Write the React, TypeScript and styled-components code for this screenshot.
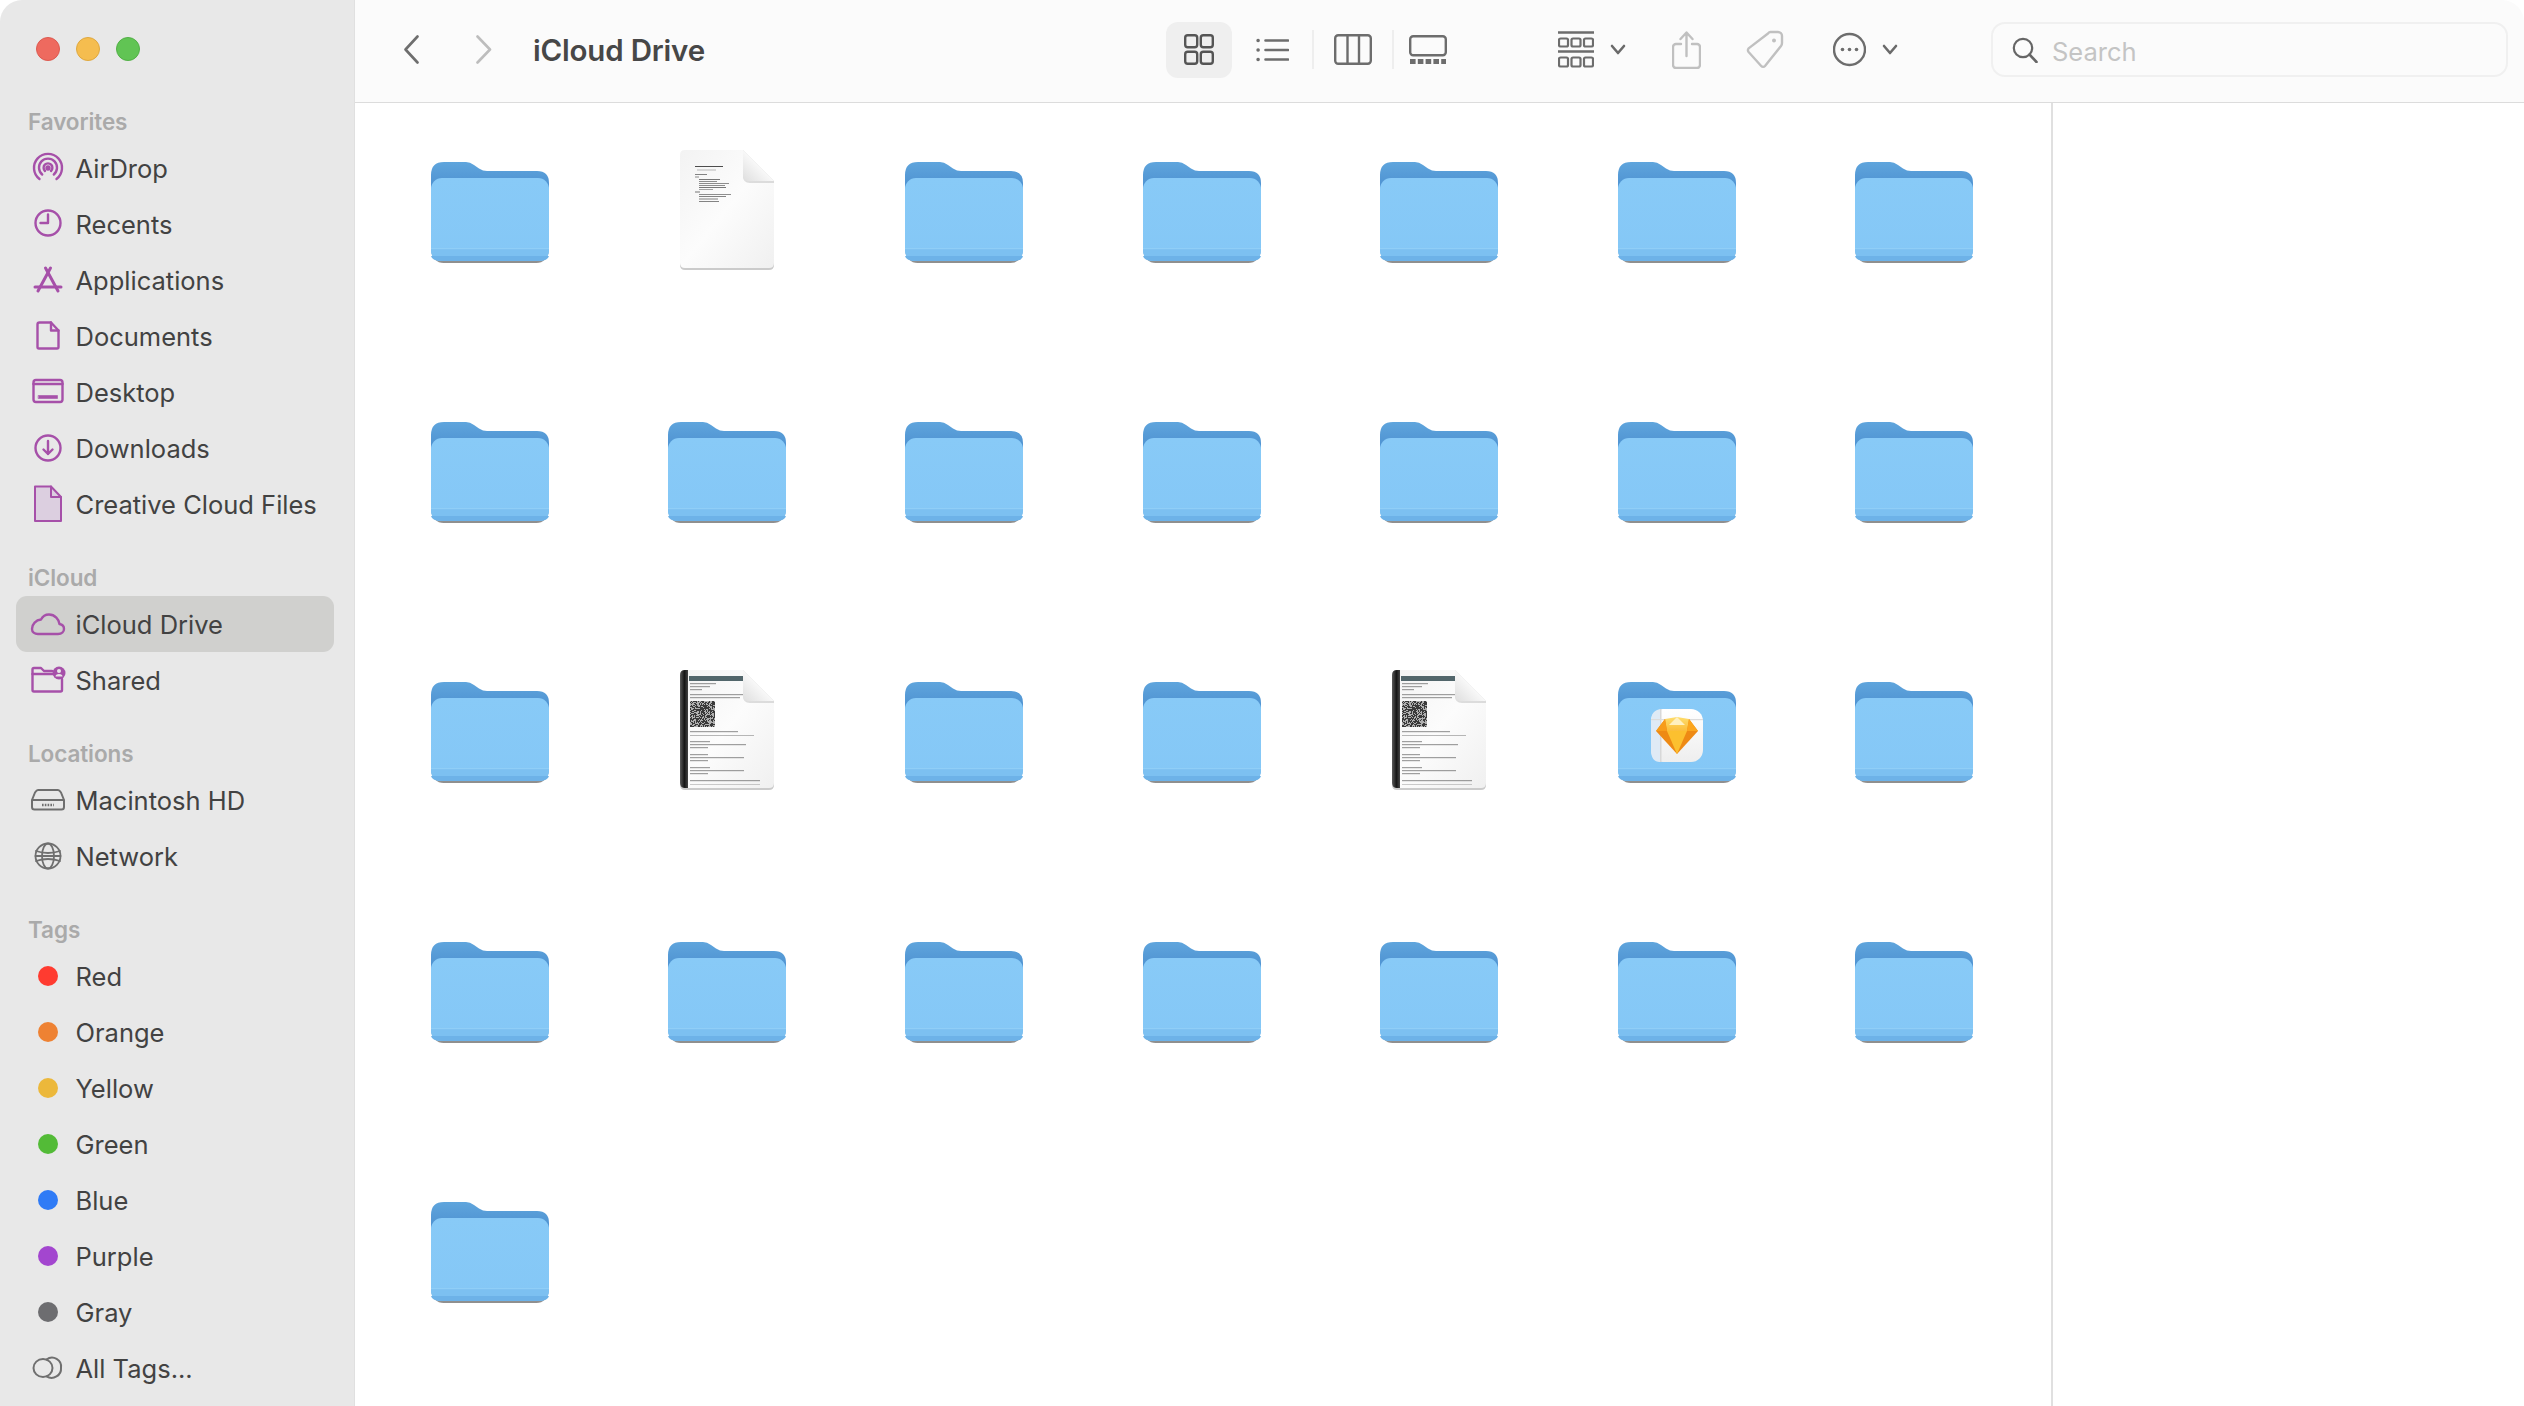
import React from "react";
import styled, { createGlobalStyle } from "styled-components";

const Global = createGlobalStyle`
  html, body { margin: 0; padding: 0; background: #ffffff; }
  #root { width: 2524px; height: 1406px; overflow: hidden; }
`;

const Win = styled.div`
  display: flex;
  width: 2524px;
  height: 1406px;
  overflow: hidden;
  border-radius: 22px 22px 0 0;
  background: #ffffff;
  font-family: Inter, "Liberation Sans", sans-serif;
`;

const Sidebar = styled.aside`
  flex: 0 0 355px;
  box-sizing: border-box;
  padding: 0 20px 0 16px;
  background: #e8e8e8;
  border-right: 1px solid #e0e0e0;
`;

const Lights = styled.div`
  display: flex;
  gap: 16px;
  height: 103px;
  box-sizing: border-box;
  padding: 37px 0 0 20px;
`;

const Light = styled.span<{ $c: string; $b: string }>`
  width: 24px;
  height: 24px;
  box-sizing: border-box;
  border-radius: 50%;
  background: ${(p) => p.$c};
  border: 1px solid ${(p) => p.$b};
`;

const Section = styled.section`
  margin-bottom: 27px;
`;

const SectionTitle = styled.div`
  height: 37px;
  line-height: 37px;
  padding-left: 12px;
  font-size: 22.5px;
  font-weight: 600;
  color: #aaaaaa;
  letter-spacing: -0.1px;
`;

const Row = styled.div<{ $active?: boolean }>`
  display: flex;
  align-items: center;
  height: 56px;
  box-sizing: border-box;
  padding-left: 8px;
  border-radius: 11px;
  background: ${(p) => (p.$active ? "#d0d0ce" : "transparent")};
  font-size: 25.5px;
  color: #424242;
`;

const Slot = styled.span`
  flex: 0 0 48px;
  display: flex;
  align-items: center;
  justify-content: center;
  margin-right: 3.5px;
`;

const Ico = styled.svg<{ $c?: string; $w?: number }>`
  display: block;
  fill: none;
  stroke: ${(p) => p.$c || "#a650a9"};
  stroke-width: ${(p) => p.$w || 2.4};
  stroke-linecap: round;
  stroke-linejoin: round;
`;

const Dot = styled.span<{ $c: string }>`
  width: 20px;
  height: 20px;
  border-radius: 50%;
  background: ${(p) => p.$c};
`;

const Main = styled.main`
  flex: 1;
  display: flex;
  flex-direction: column;
  min-width: 0;
`;

const Toolbar = styled.header`
  flex: 0 0 103px;
  display: flex;
  align-items: center;
  box-sizing: border-box;
  height: 103px;
  padding: 0 16px 3px 49px;
  background: #fbfbfb;
  border-bottom: 1.5px solid #dcdcdc;
`;

const Tool = styled.span<{ $ml: number }>`
  display: flex;
  align-items: center;
  justify-content: center;
  margin-left: ${(p) => p.$ml}px;
`;

const Title = styled.h1`
  flex: 0 0 633px;
  margin: 0 0 0 41px;
  font-size: 29.5px;
  line-height: 40px;
  font-weight: 600;
  color: #474747;
  letter-spacing: -0.2px;
`;

const ActiveView = styled.span`
  display: flex;
  align-items: center;
  justify-content: center;
  width: 66px;
  height: 56px;
  border-radius: 12px;
  background: #efefef;
`;

const Sep = styled.span<{ $ml: number }>`
  width: 2px;
  height: 39px;
  margin-left: ${(p) => p.$ml}px;
  background: #eeeeee;
`;

const Search = styled.div`
  display: flex;
  align-items: center;
  gap: 14px;
  box-sizing: border-box;
  width: 517px;
  height: 55px;
  margin-left: auto;
  padding-left: 19px;
  border: 2px solid #f0f0f0;
  border-radius: 14px;
  background: #fbfbfb;
  font-size: 25.5px;
  color: #c4c4c4;
`;

const SearchLabel = styled.span`
  position: relative;
  top: 2px;
`;

const Body = styled.div`
  flex: 1;
  display: flex;
  min-height: 0;
`;

const Grid = styled.div`
  flex: 0 0 1696px;
  box-sizing: border-box;
  display: grid;
  grid-template-columns: repeat(7, 237.4px);
  grid-auto-rows: 260px;
  justify-items: center;
  align-content: start;
  padding: 43px 0 0 16px;
`;

const Art = styled.svg`
  display: block;
  width: 130px;
  height: 130px;
  overflow: visible;
`;

const SoftGroup = styled.g`
  filter: blur(0.45px);
`;

const Inspector = styled.div`
  flex: 1;
  background: #ffffff;
  border-left: 2px solid #e0e0e0;
`;

/* ---------- file artwork ---------- */

const Folder: React.FC<{ children?: React.ReactNode }> = ({ children }) => (
  <g transform="translate(6 15)">
    <defs>
      <linearGradient id="fBack" x1="0" y1="0" x2="0" y2="1">
        <stop offset="0" stopColor="#5fa5dd" />
        <stop offset="1" stopColor="#4587ca" />
      </linearGradient>
      <linearGradient id="fFront" x1="0" y1="0" x2="0" y2="1">
        <stop offset="0" stopColor="#88caf7" />
        <stop offset="1" stopColor="#84c7f6" />
      </linearGradient>
    </defs>
    <rect x="0.5" y="60" width="117" height="42" rx="12" fill="#5f5f5f" opacity="0.7" />
    <path d="M0 14 Q0 1 13 1 H35 Q39 1 43 4 L48 7.5 Q52 10 56 10 H106 Q118 10 118 22 V40 H0 Z" fill="url(#fBack)" />
    <rect x="0" y="17" width="118" height="83" rx="11" fill="url(#fFront)" />
    <path d="M0 87 H118 V89 Q118 100 107 100 H11 Q0 100 0 89 Z" fill="#7cc0f1" />
    <rect x="0" y="87" width="118" height="1.2" fill="#90cef7" />
    <path d="M0 95 H118 Q117 100 107 100 H11 Q1 100 0 95 Z" fill="#6db2e8" />
    {children}
  </g>
);

const Sketch = () => (
  <g>
    <defs>
      <linearGradient id="skTile" x1="0" y1="0" x2="0" y2="1">
        <stop offset="0" stopColor="#ffffff" />
        <stop offset="1" stopColor="#eeeeee" />
      </linearGradient>
      <linearGradient id="skGem" x1="0" y1="0" x2="0" y2="1">
        <stop offset="0" stopColor="#fedd6c" />
        <stop offset="1" stopColor="#fbbd3a" />
      </linearGradient>
    </defs>
    <rect x="33" y="28" width="52" height="53" rx="12" fill="url(#skTile)" />
    <path d="M42 28 H45 Q33 28 33 40 V69 Q33 81 42 81 Z" fill="#dfeaf5" />
    <rect x="42" y="28" width="1.5" height="53" fill="#d8d8d8" />
    <rect x="33" y="38" width="52" height="1.2" fill="#dcdcdc" />
    <polygon points="47,38 71,38 80,50 59,73 38,50" fill="#ee8a14" />
    <polygon points="47,38 59,36 71,38 69,50 49,50" fill="url(#skGem)" />
    <polygon points="59,36 67,44 51,44" fill="#fff0c0" />
    <polygon points="49,50 69,50 59,73" fill="#fcc02f" />
    <polygon points="71,38 80,50 69,50" fill="#fba61f" />
    <polygon points="47,38 38,50 49,50" fill="#f79c1a" />
  </g>
);

const paperLines: [number, number, number, number][] = [
  [15, 16, 28, 0.8], [17, 19.5, 19, 0.3], [15, 24, 12, 0.55], [15, 26.5, 4, 0.5],
  [19, 29, 21, 0.6], [19, 31, 18, 0.5], [19, 33, 30, 0.5], [19, 35, 26, 0.5],
  [19, 37, 27, 0.6], [19, 39, 14, 0.4], [15, 41.5, 5, 0.6], [19, 44, 32, 0.5],
  [19, 46, 27, 0.55], [19, 48.5, 19, 0.55], [19, 51, 20, 0.55],
];

const Paper: React.FC<{ children?: React.ReactNode }> = ({ children }) => (
  <g transform="translate(18 4)">
    <defs>
      <linearGradient id="pBody" x1="0" y1="0" x2="1" y2="1">
        <stop offset="0" stopColor="#f3f3f3" />
        <stop offset="0.5" stopColor="#fcfcfc" />
        <stop offset="1" stopColor="#f0f0f0" />
      </linearGradient>
      <linearGradient id="pFold" x1="0" y1="1" x2="1" y2="0">
        <stop offset="0" stopColor="#dedede" />
        <stop offset="0.55" stopColor="#fbfbfb" />
      </linearGradient>
    </defs>
    <path d="M5 1 H63 L94 32 V113 Q94 118 89 118 H5 Q0 118 0 113 V6 Q0 1 5 1 Z" fill="#7d7d7d" opacity="0.4" transform="translate(0 2)" />
    <path d="M5 0 H63 L94 31 V113 Q94 118 89 118 H5 Q0 118 0 113 V5 Q0 0 5 0 Z" fill="url(#pBody)" />
    <SoftGroup>{children}</SoftGroup>
    <path d="M63 0 V26 Q63 33 70 33 H94 L94 31 Z" fill="#bdbdbd" opacity="0.5" />
    <path d="M63 0 L94 31 H68 Q63 31 63 26 Z" fill="url(#pFold)" />
  </g>
);

const TextDoc = () => (
  <Paper>
    {paperLines.map(([x, y, w, o], i) => (
      <rect key={i} x={x} y={y} width={w} height="1" fill="#222222" opacity={o} />
    ))}
  </Paper>
);

const noisePath = (() => {
  let seed = 7;
  let d = "";
  for (let y = 0; y < 26; y++) {
    for (let x = 0; x < 25; x++) {
      seed = (seed * 1103515245 + 12345) & 0x7fffffff;
      if ((seed >> 16) % 100 < 55) d += `M${x} ${y}h1v1h-1z`;
    }
  }
  return d;
})();

const scanLines: [number, number, number][] = [
  [10, 13, 26], [10, 16, 20], [10, 19, 12], [10, 24, 54], [10, 27, 50],
  [10, 61, 48], [10, 71, 20], [10, 74, 56], [10, 77, 18], [10, 84, 18], [10, 87, 54], [10, 90, 18],
  [10, 97, 20], [10, 100, 54], [10, 103, 18], [10, 110, 70],
];

const ScanDoc = () => (
  <Paper>
    <defs>
      <linearGradient id="pSpine" x1="0" y1="0" x2="1" y2="0">
        <stop offset="0" stopColor="#5a5a5a" />
        <stop offset="0.55" stopColor="#151515" />
        <stop offset="1" stopColor="#444444" />
      </linearGradient>
    </defs>
    <path d="M5 0 H8 V118 H5 Q0 118 0 113 V5 Q0 0 5 0 Z" fill="url(#pSpine)" />
    <rect x="9" y="6" width="54" height="5" fill="#52666b" />
    {scanLines.map(([x, y, w], i) => (
      <rect key={i} x={x} y={y} width={w} height="1.2" fill="#444444" opacity="0.5" />
    ))}
    <rect x="10" y="31" width="25" height="26" fill="#b0b0b0" />
    <path transform="translate(10 31)" d={noisePath} fill="#3a3a3a" />
    <rect x="10" y="65" width="64" height="1" fill="#888888" opacity="0.6" />
    <rect x="10" y="114" width="70" height="1" fill="#999999" opacity="0.5" />
  </Paper>
);

type Kind = "f" | "t" | "s" | "k";
const files: Kind[] = [
  "f", "t", "f", "f", "f", "f", "f",
  "f", "f", "f", "f", "f", "f", "f",
  "f", "s", "f", "f", "s", "k", "f",
  "f", "f", "f", "f", "f", "f", "f",
  "f",
];

const FileIcon: React.FC<{ kind: Kind }> = ({ kind }) => (
  <Art viewBox="0 0 130 130">
    {kind === "f" && <Folder />}
    {kind === "k" && (
      <Folder>
        <Sketch />
      </Folder>
    )}
    {kind === "t" && <TextDoc />}
    {kind === "s" && <ScanDoc />}
  </Art>
);

/* ---------- sidebar icons ---------- */

const ICON = { width: 40, height: 40, viewBox: "0 0 40 40" };
const GRAY = "#6f6f6f";
const PURPLE = "#a650a9";

const AirDropI = () => (
  <Ico {...ICON}>
    <path d="M11.5 31 A14 14 0 1 1 28.5 31" />
    <path d="M14.2 26.5 A9 9 0 1 1 25.8 26.5" />
    <path d="M17 23 A4.4 4.4 0 1 1 23 23" />
    <circle cx="20" cy="20" r="1.5" fill={PURPLE} />
  </Ico>
);
const ClockI = () => (
  <Ico {...ICON}>
    <circle cx="20" cy="19" r="12.5" />
    <path d="M20 10.5 V19 H12.5" />
  </Ico>
);
const AppsI = () => (
  <Ico {...ICON} $w={3}>
    <path d="M17.5 8 L30 31" />
    <path d="M22.5 8 L10 31" />
    <path d="M7 27 H33" />
  </Ico>
);
const DocI = () => (
  <Ico {...ICON}>
    <path d="M12 6.5 H23 L30.5 14.5 V31 a1.5 1.5 0 0 1 -1.5 1.5 H11 a1.5 1.5 0 0 1 -1.5 -1.5 V8.5 a2 2 0 0 1 2 -2 Z" />
    <path d="M23 6.5 V14.5 H30.5" />
  </Ico>
);
const DesktopI = () => (
  <Ico {...ICON}>
    <rect x="5.5" y="8" width="29" height="22" rx="2.5" />
    <path d="M5.5 12 H34.5" />
    <rect x="10.5" y="23.5" width="19" height="3" fill={PURPLE} strokeWidth="0.6" />
  </Ico>
);
const DownloadI = () => (
  <Ico {...ICON}>
    <circle cx="20" cy="20" r="12.5" />
    <path d="M20 13 V26 M15.5 21.5 L20 26 L24.5 21.5" />
  </Ico>
);
const CreativeI = () => (
  <Ico {...ICON} $w={2}>
    <path d="M7 2.5 H23 L33 13 V37 H7 Z" fill="#dccfe0" />
    <path d="M23 2.5 V13 H33" />
  </Ico>
);
const CloudI = () => (
  <Ico {...ICON}>
    <path d="M10 30 H30 C34 30 36 27.5 36 25 C36 22.5 34.5 20.5 31.5 20 C31 15.5 27 10.5 21 10.5 C17 10.5 14.5 12.5 13 15.5 C8 16 4 20 4 25 C4 28 6.5 30 10 30 Z" />
  </Ico>
);
const SharedI = () => (
  <Ico {...ICON}>
    <path d="M4.5 14 V9.5 a1.5 1.5 0 0 1 1.5 -1.5 H13 L16 11 H24" />
    <path d="M4.5 14 H26 M34 19 V30 a1.5 1.5 0 0 1 -1.5 1.5 H6 a1.5 1.5 0 0 1 -1.5 -1.5 V14" />
    <circle cx="31" cy="13" r="6.5" fill={PURPLE} stroke="none" />
    <circle cx="31" cy="11" r="2" fill="#e8e8e8" stroke="none" />
    <path d="M27.5 16.5 a3.5 2.5 0 0 1 7 0 Z" fill="#e8e8e8" stroke="none" />
  </Ico>
);
const DiskI = () => (
  <Ico {...ICON} $c={GRAY} $w={2}>
    <path d="M10 10 H30 C31 10 32 11 33 12.5 L36 20 V27 a2.5 2.5 0 0 1 -2.5 2.5 H6.5 A2.5 2.5 0 0 1 4 27 V20 L7 12.5 C8 11 9 10 10 10 Z" />
    <path d="M4.5 20 H35.5" />
    <path d="M14 25 H26" strokeDasharray="1.6 1.2" strokeLinecap="butt" strokeWidth="2.4" />
  </Ico>
);
const GlobeI = () => (
  <Ico {...ICON} $c={GRAY} $w={1.8}>
    <circle cx="20" cy="20" r="12.5" />
    <ellipse cx="20" cy="20" rx="6" ry="12.5" />
    <path d="M8 15 Q20 19 32 15 M8 25 Q20 21 32 25 M7.5 20 H32.5" />
  </Ico>
);
const AllTagsI = () => (
  <Ico {...ICON} $c={GRAY} $w={2}>
    <ellipse cx="15" cy="20" rx="9.5" ry="9" />
    <path d="M18.5 11.6 A9 9 0 0 1 33 20 A9.5 9 0 0 1 18.5 28.4" />
  </Ico>
);

type Item = { label: string; icon?: React.ReactNode; tag?: string; active?: boolean };
const sections: { title: string; items: Item[] }[] = [
  {
    title: "Favorites",
    items: [
      { label: "AirDrop", icon: <AirDropI /> },
      { label: "Recents", icon: <ClockI /> },
      { label: "Applications", icon: <AppsI /> },
      { label: "Documents", icon: <DocI /> },
      { label: "Desktop", icon: <DesktopI /> },
      { label: "Downloads", icon: <DownloadI /> },
      { label: "Creative Cloud Files", icon: <CreativeI /> },
    ],
  },
  {
    title: "iCloud",
    items: [
      { label: "iCloud Drive", icon: <CloudI />, active: true },
      { label: "Shared", icon: <SharedI /> },
    ],
  },
  {
    title: "Locations",
    items: [
      { label: "Macintosh HD", icon: <DiskI /> },
      { label: "Network", icon: <GlobeI /> },
    ],
  },
  {
    title: "Tags",
    items: [
      { label: "Red", tag: "#ff3b30" },
      { label: "Orange", tag: "#ee8233" },
      { label: "Yellow", tag: "#ecb83b" },
      { label: "Green", tag: "#53bb37" },
      { label: "Blue", tag: "#2f7bf6" },
      { label: "Purple", tag: "#a346cf" },
      { label: "Gray", tag: "#6d6d70" },
      { label: "All Tags...", icon: <AllTagsI /> },
    ],
  },
];

/* ---------- toolbar icons ---------- */

const Chevron = () => (
  <Ico width={16} height={11} viewBox="0 0 16 11" $c="#6a6a6a" $w={2.6}>
    <path d="M2 2 L8 9 L14 2" />
  </Ico>
);

export default function App() {
  return (
    <Win>
      <Global />
      <Sidebar>
        <Lights>
          <Light $c="#ee6a5f" $b="#dd5a50" />
          <Light $c="#f5bd4f" $b="#dfa83f" />
          <Light $c="#61c454" $b="#52b046" />
        </Lights>
        {sections.map((s) => (
          <Section key={s.title}>
            <SectionTitle>{s.title}</SectionTitle>
            {s.items.map((it) => (
              <Row key={it.label} $active={it.active}>
                <Slot>{it.tag ? <Dot $c={it.tag} /> : it.icon}</Slot>
                {it.label}
              </Row>
            ))}
          </Section>
        ))}
      </Sidebar>
      <Main>
        <Toolbar>
          <Ico width={15} height={29} viewBox="0 0 15 29" $c="#6e6e6e" $w={2.6}>
            <path d="M13.5 1.5 L1.5 14.5 L13.5 27.5" />
          </Ico>
          <Tool $ml={57}>
            <Ico width={16} height={29} viewBox="0 0 16 29" $c="#bdbdbd" $w={2.6}>
              <path d="M1.5 1.5 L14 14.5 L1.5 27.5" />
            </Ico>
          </Tool>
          <Title>iCloud Drive</Title>
          <ActiveView>
            <Ico width={30} height={31} viewBox="0 0 30 31" $c="#555555" $w={2.4}>
              <rect x="1.2" y="1.2" width="12" height="12" rx="2.5" />
              <rect x="16.8" y="1.2" width="12" height="12" rx="2.5" />
              <rect x="1.2" y="17.8" width="12" height="12" rx="2.5" />
              <rect x="16.8" y="17.8" width="12" height="12" rx="2.5" />
            </Ico>
          </ActiveView>
          <Tool $ml={24}>
            <Ico width={33} height={24} viewBox="0 0 33 24" $c="#6d6d6d" $w={2.6}>
              <path d="M9.5 2.5 H32 M9.5 12 H32 M9.5 21.5 H32" />
              <path d="M2 2.5 H2.2 M2 12 H2.2 M2 21.5 H2.2" strokeWidth="3.4" />
            </Ico>
          </Tool>
          <Sep $ml={23} />
          <Tool $ml={20}>
            <Ico width={38} height={31} viewBox="0 0 38 31" $c="#6d6d6d" $w={2.4}>
              <rect x="1.2" y="1.2" width="35.6" height="28.6" rx="3" />
              <path d="M13.5 1.2 V29.8 M25 1.2 V29.8" />
            </Ico>
          </Tool>
          <Sep $ml={20} />
          <Tool $ml={15}>
            <Ico width={38} height={30} viewBox="0 0 38 30" $c="#6d6d6d" $w={2.4}>
              <rect x="1.2" y="1.2" width="35.6" height="19" rx="3" />
              <path d="M1 26.5 H37" strokeWidth="5" strokeDasharray="5.6 2.2" strokeLinecap="butt" />
            </Ico>
          </Tool>
          <Tool $ml={111}>
            <Ico width={36} height={37} viewBox="0 0 36 37" $c="#6d6d6d" $w={2.2}>
              <path d="M0 1.5 H36 M0 20.5 H36" strokeWidth="2.6" />
              <rect x="1" y="7.5" width="9" height="8" rx="1.5" />
              <rect x="13.5" y="7.5" width="9" height="8" rx="1.5" />
              <rect x="26" y="7.5" width="9" height="8" rx="1.5" />
              <rect x="1" y="26.5" width="9" height="9" rx="1.5" />
              <rect x="13.5" y="26.5" width="9" height="9" rx="1.5" />
              <rect x="26" y="26.5" width="9" height="9" rx="1.5" />
            </Ico>
          </Tool>
          <Tool $ml={16}>
            <Chevron />
          </Tool>
          <Tool $ml={46}>
            <Ico width={29} height={38} viewBox="0 0 29 38" $c="#c0c0c0" $w={2.4}>
              <path d="M9 13 H4 a3 3 0 0 0 -3 3 V34 a3 3 0 0 0 3 3 H25 a3 3 0 0 0 3 -3 V16 a3 3 0 0 0 -3 -3 H20" />
              <path d="M14.5 25 V2 M8.5 8 L14.5 1.5 L20.5 8" />
            </Ico>
          </Tool>
          <Tool $ml={45}>
            <Ico width={38} height={39} viewBox="0 0 38 39" $c="#c0c0c0" $w={2.4}>
              <path d="M22 3.5 a3 3 0 0 1 2.3 -1.5 H32 a4 4 0 0 1 4 4 V13 a5 5 0 0 1 -1 3 L19 36 a2.5 2.5 0 0 1 -3.8 0 L2.6 22 a3 3 0 0 1 0 -3.6 Z" />
              <circle cx="28" cy="10.5" r="2" fill="#c0c0c0" stroke="none" />
            </Ico>
          </Tool>
          <Tool $ml={49}>
            <Ico width={33} height={35} viewBox="0 0 33 35" $c="#6d6d6d" $w={2.4}>
              <circle cx="16.5" cy="17.5" r="15.5" />
              <circle cx="9.5" cy="17.5" r="1.8" fill="#6d6d6d" stroke="none" />
              <circle cx="16.5" cy="17.5" r="1.8" fill="#6d6d6d" stroke="none" />
              <circle cx="23.5" cy="17.5" r="1.8" fill="#6d6d6d" stroke="none" />
            </Ico>
          </Tool>
          <Tool $ml={16}>
            <Chevron />
          </Tool>
          <Search>
            <Ico width={26} height={26} viewBox="0 0 26 26" $c="#666666" $w={2.2}>
              <circle cx="11" cy="11" r="9.2" />
              <path d="M17.5 17.5 L24.5 25" strokeWidth="2.6" />
            </Ico>
            <SearchLabel>Search</SearchLabel>
          </Search>
        </Toolbar>
        <Body>
          <Grid>
            {files.map((k, i) => (
              <FileIcon key={i} kind={k} />
            ))}
          </Grid>
          <Inspector />
        </Body>
      </Main>
    </Win>
  );
}
